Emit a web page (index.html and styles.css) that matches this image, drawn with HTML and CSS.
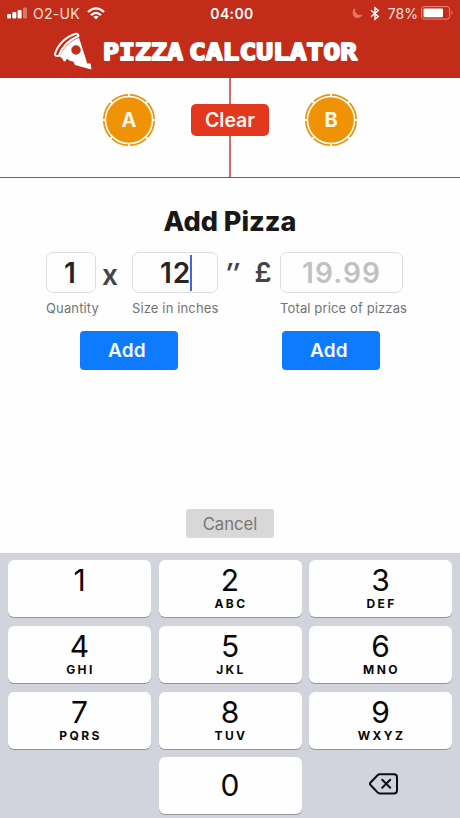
FILE: index.html
```html
<!DOCTYPE html>
<html lang="en">
<head>
<meta charset="utf-8">
<title>Pizza Calculator</title>
<link rel="stylesheet" href="styles.css">
</head>
<body>
<header class="header">
  <div class="status">
    <div class="status-left">
      <svg class="signal" width="21" height="12" viewBox="0 0 21 12" fill="#fff"><rect x="0" y="7" width="4" height="4.5" rx="1"/><rect x="5.3" y="5" width="4" height="6.5" rx="1"/><rect x="10.6" y="3" width="4" height="8.5" rx="1"/><rect x="16" y="0.5" width="4" height="11" rx="1" opacity=".35"/></svg>
      <span class="carrier">O2-UK</span>
      <svg width="18" height="13" viewBox="0 0 18 13" fill="none" stroke="#fff" stroke-width="2.3"><path d="M1 5Q9-2.3 17 5M4 8.2Q9 3.6 14 8.2"/><path d="M9 12.5 6.4 9.8Q9 7.8 11.6 9.8Z" fill="#fff" stroke="none"/></svg>
    </div>
    <time class="clock">04:00</time>
    <div class="status-right">
      <svg width="11" height="12" viewBox="0 0 11 12"><path d="M3.3.8C-.8 3-.2 11 5.3 11c2.5 0 4.4-1.4 5.2-3.4C6 9.4 2 5.8 3.3.8Z" fill="#df7769"/></svg>
      <svg class="bluetooth" width="10" height="15" viewBox="0 0 10 15" fill="none" stroke="#fff" stroke-width="1.4"><path d="M1 4.2 8.3 10.4 5 13.3V1.7l3.3 2.9L1 10.8"/></svg>
      <span class="percent">78%</span>
      <svg width="33" height="14" viewBox="0 0 33 14"><rect x=".6" y=".6" width="28" height="12.5" rx="2.5" fill="none" stroke="#e48c7d" stroke-width="1"/><rect x="2.5" y="2.5" width="19.5" height="8.8" rx="1" fill="#fff"/><path d="M30.5 4.5q2 2.3 0 4.6Z" fill="#e48c7d"/></svg>
    </div>
  </div>
  <div class="brand">
    <svg class="slice" width="39" height="39" viewBox="0 0 39 39"><path d="M2 22C4.5 13 13 4.5 23 1.8q2.3-.2 2.5 2.2C16 8 9.2 14.5 5.6 24Q2 24.5 2 22Z" fill="none" stroke="#fff" stroke-width="2" stroke-linejoin="round"/><path fill="#fff" fill-rule="evenodd" d="M26 5.8 33.2 28l1 3.4 3.4.1.8 6.1L30 35.2 22 33l-1.5-3.2-3.5-1-3.4-2-.8 2q-1.8 1.4-2.6-.4l-.8-2-2.9-1.8C10 16.5 16.5 9.4 26 5.8ZM23 13.3a4.7 4.7 0 1 0 0 9.4 4.7 4.7 0 0 0 0-9.4Z"/></svg>
    <svg class="wordmark" width="266" height="40" viewBox="0 0 266 40"><g class="wordmark-text"><text x="4" y="28" textLength="80" lengthAdjust="spacingAndGlyphs">PIZZA</text><text x="90" y="28" textLength="168" lengthAdjust="spacingAndGlyphs">CALCULATOR</text></g></svg>
  </div>
</header>
<section class="compare">
  <div class="side">
    <svg width="54" height="54" viewBox="0 0 54 54"><circle cx="27" cy="27" r="25.2" class="crust" pathLength="80"/><circle cx="27" cy="27" r="22.8" fill="#f09205"/><text class="badge" x="27" y="34.3" text-anchor="middle">A</text></svg>
  </div>
  <div class="side side-b">
    <svg width="54" height="54" viewBox="0 0 54 54"><circle cx="27" cy="27" r="25.2" class="crust" pathLength="80"/><circle cx="27" cy="27" r="22.8" fill="#f09205"/><text class="badge" x="27" y="34.3" text-anchor="middle">B</text></svg>
  </div>
  <button class="clear">Clear</button>
</section>
<main class="entry">
  <h1 class="title">Add Pizza</h1>
  <div class="fields">
    <label class="field quantity"><span class="box">1</span><span class="caption">Quantity</span></label>
    <span class="times">x</span>
    <label class="field size"><span class="box">12<i class="caret"></i></span><span class="caption">Size in inches</span></label>
    <span class="inches">″</span>
    <span class="pound">£</span>
    <label class="field price"><span class="box placeholder">19.99</span><span class="caption">Total price of pizzas</span></label>
  </div>
  <div class="actions"><button class="add">Add</button><button class="add">Add</button></div>
  <button class="cancel">Cancel</button>
</main>
<div class="keypad">
  <div class="key">1</div>
  <div class="key">2<small>ABC</small></div>
  <div class="key">3<small>DEF</small></div>
  <div class="key">4<small>GHI</small></div>
  <div class="key">5<small>JKL</small></div>
  <div class="key">6<small>MNO</small></div>
  <div class="key">7<small>PQRS</small></div>
  <div class="key">8<small>TUV</small></div>
  <div class="key">9<small>WXYZ</small></div>
  <div></div>
  <div class="key zero">0</div>
  <div class="delete"><svg width="30" height="22" viewBox="0 0 30 22" fill="none" stroke="#0b0d12" stroke-width="2" stroke-linejoin="round" stroke-linecap="round"><path d="M10.5 1.2H25q3 0 3 3v13.2q0 3-3 3H10.5Q9.5 20.4 8.8 19.6L1.3 11.8Q.7 10.8 1.3 9.8L8.8 2Q9.5 1.2 10.5 1.2Z"/><path d="m13.2 6.8 8 8m0-8-8 8"/></svg></div>
</div>
</body>
</html>
```
FILE: styles.css
```css
* { box-sizing: border-box; }
body {
  margin: 0;
  width: 460px;
  height: 818px;
  overflow: hidden;
  display: flex;
  flex-direction: column;
  background: #fefefe;
  color: #252525;
  font-family: Inter, "Liberation Sans", sans-serif;
}
svg { display: block; flex: none; }
button { border: 0; padding: 0; font-family: inherit; }

.header { height: 78px; flex: none; background: #c32c19; color: #fff; }
.status {
  height: 26px;
  padding: 0 6px 0 7px;
  display: grid;
  grid-template-columns: 1fr auto 1fr;
  align-items: center;
  font-size: 14px;
}
.status-left, .status-right { display: flex; align-items: center; }
.status-right { justify-content: flex-end; }
.carrier { margin: 0 7px 0 5px; font-size: 14.1px; letter-spacing: .2px; color: #fbe2dc; }
.clock { font-weight: 600; font-size: 14px; letter-spacing: .4px; margin-left: 3px; }
.bluetooth { margin: 0 8px 0 7px; }
.percent { margin-right: 3px; color: #fbe2dc; }
.brand { display: flex; padding-left: 53px; }
.slice { margin-top: 6px; }
.wordmark { margin: 6px 0 0 7px; }
.wordmark-text {
  font: 700 23.5px "DejaVu Sans Mono", monospace;
  fill: #fff;
  stroke: #fff;
  stroke-width: 1.8;
  stroke-linejoin: round;
}

.compare {
  position: relative;
  height: 100px;
  flex: none;
  display: grid;
  grid-template-columns: 1fr 1fr;
  border-bottom: 1px solid #c63f36;
}
.side { padding: 15px 0 0 102px; }
.side-b { padding-left: 74px; }
.side:first-child { width: 231px; margin-right: -1px; border-right: 2px solid #cf6e68; }
.crust { fill: none; stroke: #f09205; stroke-width: 1.7; stroke-dasharray: 9 1; stroke-dashoffset: -.5; }
.badge { font: 700 20px Inter, sans-serif; fill: #fff8ec; }
.clear {
  position: absolute;
  left: 191px;
  top: 26px;
  width: 78px;
  height: 32px;
  border-radius: 5px;
  background: #e3371e;
  color: #fff5f1;
  font-size: 19.5px;
  font-weight: 600;
  line-height: 31px;
}

.entry { flex: none; height: 375px; display: flex; flex-direction: column; align-items: center; }
.title { margin: 27px 0 0; font-size: 27px; line-height: 34px; font-weight: 800; color: #181818; }
.fields { width: 368px; margin: 13px 0 0; display: flex; align-items: flex-start; font-weight: 600; font-size: 28px; }
.field { display: block; white-space: nowrap; }
.box {
  display: flex;
  align-items: center;
  justify-content: center;
  height: 41px;
  border: 1px solid #dedede;
  border-radius: 7px;
}
.quantity { width: 50px; }
.quantity .box { padding-right: 2px; }
.size { width: 86px; }
.size .box { letter-spacing: .8px; }
.price { width: 123px; }
.caption { display: block; margin-top: 7px; font-size: 13px; line-height: 17px; font-weight: 400; color: #737373; letter-spacing: .13px; }
.caret { width: 2px; height: 36px; margin: 0 -2px 0 -1px; background: #4965dc; }
.box.placeholder { color: #c1c1c3; letter-spacing: 1.1px; }
.times, .inches, .pound { line-height: 41px; color: #444; }
.times { width: 36px; text-align: center; padding: 3px 9px 0 1px; margin-left: 0; }
.inches { width: 28px; text-align: center; font-style: italic; font-size: 27px; padding-top: 1px; }
.pound { width: 34px; text-align: center; font-size: 27px; }
.actions { width: 300px; margin-top: 14px; display: flex; justify-content: space-between; }
.add { width: 98px; height: 39px; padding: 0 4px 0 0; border-radius: 4px; background: #0e7afe; color: #f7fbff; font-size: 19px; font-weight: 600; letter-spacing: .2px; }
.cancel { margin-top: 139px; width: 88px; height: 29px; border-radius: 3px; background: #d8d8d8; color: #777; font-size: 16.7px; }

.keypad {
  flex: none;
  height: 265px;
  padding: 7px 8px 0;
  background: #d1d4dc;
  display: grid;
  grid-template-columns: repeat(3, 1fr);
  grid-template-rows: repeat(4, 57px);
  gap: 8.8px 7.5px;
}
.key {
  display: flex;
  flex-direction: column;
  align-items: center;
  padding-top: 4px;
  border-radius: 6px;
  background: #fefefe;
  box-shadow: 0 1px 0 #92959c;
  color: #080808;
  font-size: 30px;
  line-height: 32px;
}
.key small { margin-top: 1px; padding-left: 2px; font-size: 12px; line-height: 14px; font-weight: 700; letter-spacing: 2.4px; }
.zero { padding-top: 12px; }
.delete { display: flex; align-items: center; justify-content: center; padding: 0 0 3px 7px; }
```
